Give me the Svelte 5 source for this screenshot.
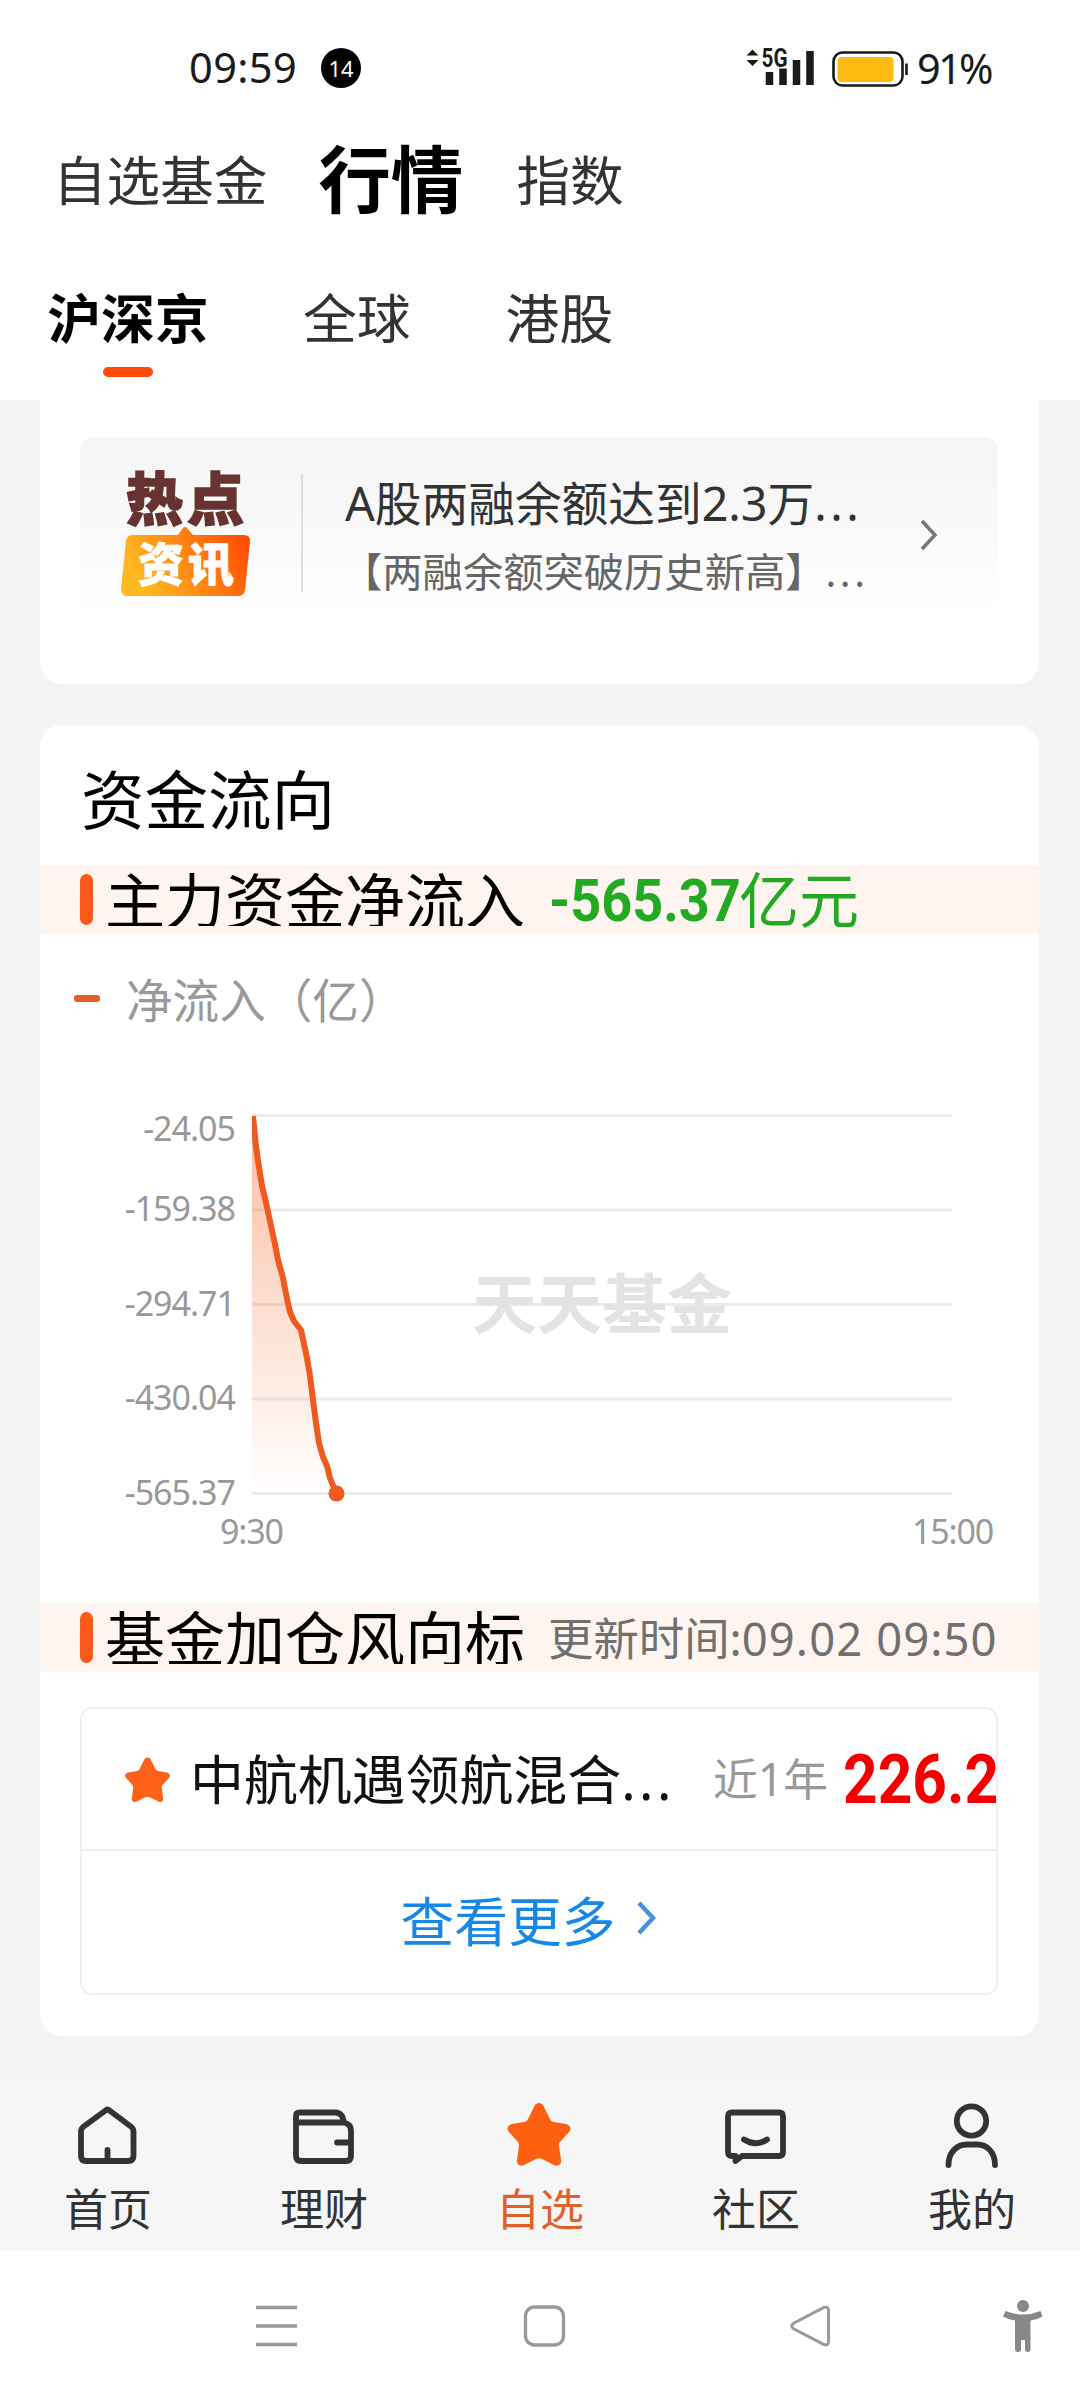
<script>
  const yLabels = ['-24.05', '-159.38', '-294.71', '-430.04', '-565.37'];
  const gridLines = [1.5, 96, 190.5, 285, 379.5];
  const line =
    'M1 2 L4 33 L7 53 L10 72 L15 93 L19 112 L23 130 L26 146 L31 164 L35 185 L38 198 L42 207 L49 216 L52 230 L55 244 L58 262 L61 286 L64 309 L67 329 L71 343 L75 352 L78 364 L84 379';
  const tabs = [
    { name: '首页', icon: 'home' },
    { name: '理财', icon: 'wallet' },
    { name: '自选', icon: 'star', active: true },
    { name: '社区', icon: 'chat' },
    { name: '我的', icon: 'user' }
  ];
  const star =
    'M32 2 C34 2 36 3 37 6 L43 18 C44 20 45 21 47 21 L59 23 C63 24 65 28 62 31 L53 41 C52 42 52 43 52 45 L54 59 C55 63 51 66 47 64 L35 58 C33 57 31 57 29 58 L17 64 C13 66 9 63 10 59 L12 45 C12 43 12 42 11 41 L2 31 C-1 28 1 24 5 23 L17 21 C19 21 20 20 21 18 L27 6 C28 3 30 2 32 2 Z';
</script>

<div class="screen">
  <div class="status">
    <span class="clock">09:59</span>
    <span class="badge">14</span>
    <svg class="signal" width="72" height="44" viewBox="0 0 72 44">
      <path d="M6.500 3.500 L12.500 9.500 H0.500 Z M6.500 20 L0.500 14 H12.500 Z" fill="#1a1a1a" />
      <text x="15.500" y="21" class="net" textLength="26" lengthAdjust="spacingAndGlyphs">5G</text>
      <path d="M23.500 26V39 M37 22.500V39 M50.500 14V39 M64 5V39" stroke="#1a1a1a" stroke-width="7.500" />
    </svg>
    <svg class="battery" width="78" height="38" viewBox="0 0 78 38">
      <rect x="1.500" y="1.500" width="69" height="33" rx="9" fill="#fff" stroke="#1a1a1a" stroke-width="2.600" />
      <rect x="5.500" y="6" width="56" height="25" rx="4" fill="#ffba12" />
      <path d="M74.500 12.500V24" stroke="#1a1a1a" stroke-width="2.600" />
    </svg>
    <span class="pct">91%</span>
  </div>

  <div class="top-tabs">
    <span>自选基金</span><strong>行情</strong><span>指数</span>
  </div>
  <div class="sub-tabs">
    <strong>沪深京</strong><span>全球</span><span>港股</span>
  </div>

  <main>
    <section class="card news-card">
      <div class="news">
        <svg class="hot" width="132" height="126" viewBox="0 0 132 126">
          <defs>
            <linearGradient id="hot" x1="0" y1="0.3" x2="1" y2="0">
              <stop offset="0" stop-color="#ffb820" />
              <stop offset="0.55" stop-color="#ff7810" />
              <stop offset="1" stop-color="#ff4200" />
            </linearGradient>
          </defs>
          <text x="6" y="49" class="hot-top" textLength="118">热点</text>
          <path d="M12 64 H58 L63 57 Q65 55 67 57 L73 64 H124 Q130 64 130 70 L125 119 Q124 125 118 125 H7 Q1 125 1 118 L6 70 Q7 64 12 64Z" fill="url(#hot)" />
          <text x="18" y="110" class="hot-bottom" textLength="96">资讯</text>
        </svg>
        <i class="rule"></i>
        <div class="news-text">
          <p class="headline">A股两融余额达到2.3万<span class="dots">...</span></p>
          <p class="summary">【两融余额突破历史新高】<span class="dots">...</span></p>
        </div>
        <svg class="chev" width="20" height="34" viewBox="0 0 20 34">
          <path d="M3 3 L16 17 L3 31" fill="none" stroke="#777" stroke-width="3.500" />
        </svg>
      </div>
    </section>

    <section class="card flow-card">
      <h2>资金流向</h2>
      <div class="band">
        <i class="mark"></i><span class="band-title">主力资金净流入</span>
        <span class="net-value"><b>-565.37</b>亿元</span>
      </div>
      <div class="legend"><i></i><span>净流入（亿）</span></div>
      <div class="chart">
        <div class="y-axis">
          {#each yLabels as label}<span>{label}</span>{/each}
        </div>
        <svg width="700" height="390" viewBox="0 0 700 390">
          <defs>
            <linearGradient id="area" x1="0" y1="0" x2="0" y2="1">
              <stop offset="0" stop-color="#f5601e" stop-opacity="0.42" />
              <stop offset="1" stop-color="#f5601e" stop-opacity="0" />
            </linearGradient>
          </defs>
          {#each gridLines as y}
            <path d="M0 {y} H700" stroke="#ececec" stroke-width="3" />
          {/each}
          <text x="220" y="214" class="watermark" textLength="260">天天基金</text>
          <path d="{line} V380 H0 V2 Z" fill="url(#area)" />
          <path d={line} fill="none" stroke="#f05a1e" stroke-width="6" stroke-linejoin="round" />
          <circle cx="84.500" cy="379.500" r="8" fill="#f05a1e" />
        </svg>
      </div>
      <div class="x-axis"><span>9:30</span><span>15:00</span></div>

      <div class="band second">
        <i class="mark"></i><span class="band-title">基金加仓风向标</span>
        <span class="updated">更新时间:<em>09.02 09:50</em></span>
      </div>
      <div class="funds">
        <div class="fund">
          <svg width="47" height="47" viewBox="0 0 64 66"><path d={star} fill="#fd6018" /></svg>
          <span class="fund-name">中航机遇领航混合<span class="dots">...</span></span>
          <span class="period">近1年</span>
          <b class="gain">226.2</b>
        </div>
        <div class="more">
          <span>查看更多</span>
          <svg width="22" height="36" viewBox="0 0 22 36">
            <path d="M3 3 L17 18 L3 33" fill="none" stroke="#4a90e2" stroke-width="4.500" />
          </svg>
        </div>
      </div>
    </section>
  </main>

  <nav class="tabbar">
    {#each tabs as tab}
      <div class="tab" class:active={tab.active}>
        <svg width="66" height="68" viewBox="0 0 66 68" fill="none" stroke="#333" stroke-width="5.800" stroke-linejoin="round" stroke-linecap="round">
          {#if tab.icon === 'home'}
            <path d="M30.500 9.500 L8 26 Q6 28 6 30 V55 Q6 60 11 60 H53 Q58.500 60 58.500 55 V30 Q58.500 28 56.500 26 L34.500 9.500 Q32.500 7.500 30.500 9.500 Z M32.500 49V59" />
          {:else if tab.icon === 'wallet'}
            <path d="M5 22 V15 Q5 11.500 9 11.500 H44 Q49 11.500 51.500 16 L53 21 M5 21.500 H53 Q60 23 60 30 V55 Q60 60 55 60 H10 Q5 60 5 55 V21.500 M59 41.500 H46" />
          {:else if tab.icon === 'star'}
            <path d={star} fill="#fd6010" stroke="none" />
          {:else if tab.icon === 'chat'}
            <path d="M9 11.500 H56 Q60 11.500 60 15.500 V51 Q60 55 56 55 H19 L12.500 60 V55 H9 Q5 55 5 51 V15.500 Q5 11.500 9 11.500 Z M21 38.500 Q32.500 46 44 38.500" />
          {:else}
            <circle cx="32.500" cy="20" r="14.700" />
            <path d="M9.500 64 C9.500 51 18 43.500 28 43.500 H38 C48 43.500 56 51 56 64" />
          {/if}
        </svg>
        <span>{tab.name}</span>
      </div>
    {/each}
  </nav>

  <footer>
    <svg width="44" height="44" viewBox="0 0 44 44"><path d="M2 3.500H43 M2 22H43 M2 40.500H43" stroke="#999" stroke-width="3.500" /></svg>
    <svg width="44" height="44" viewBox="0 0 44 44"><rect x="3.500" y="3" width="38" height="38" rx="9" fill="none" stroke="#999" stroke-width="3.300" /></svg>
    <svg width="44" height="44" viewBox="0 0 44 44"><path d="M36 3.500 Q40.500 2 40.500 6.500 V37.500 Q40.500 42 36 40.500 L6 25 Q1.500 22 6 19 Z" fill="none" stroke="#999" stroke-width="3" /></svg>
    <svg width="40" height="54" viewBox="0 0 40 54" fill="#888">
      <circle cx="20" cy="7" r="6" />
      <path d="M2.500 12 Q20 19 37.500 12 L39.500 17.500 Q34 21 27.500 21.500 V50 Q27.500 53 24.700 53 Q22 53 22 50 V41 H18 V50 Q18 53 15 53 Q12 53 12 50 V21.500 Q6 21 0 17.500 Z" />
    </svg>
  </footer>
</div>

<style>
  :global(body) { background: #fff; }
  .screen {
    width: 1080px;
    height: 2400px;
    overflow: hidden;
    display: flex;
    flex-direction: column;
    background: #fff;
    color: #333;
    font-family: "Noto Sans", "Noto Sans CJK SC", sans-serif;
    line-height: 1;
    white-space: nowrap;
  }
  .screen * { box-sizing: border-box; }
  p, h2 { margin: 0; font-weight: 400; }
  svg { display: block; flex: none; }
  em { font-style: normal; }
  .dots { letter-spacing: 3.500px; }

  .status { height: 136px; display: flex; align-items: center; padding-left: 189px; color: #1a1a1a; font-size: 41.500px; }
  .clock { width: 132px; letter-spacing: 0.400px; }
  .badge { width: 40px; height: 40px; border-radius: 50%; background: #000; color: #fff; font-size: 22px; line-height: 40px; text-align: center; }
  .signal { margin-left: 385px; overflow: visible; }
  .net { font: 700 25px Roboto, sans-serif; fill: #1a1a1a; }
  .battery { margin: 4px 0 0 14px; }
  .pct { margin: 2px 0 0 7px; letter-spacing: -2.800px; }

  .top-tabs { height: 88px; display: flex; align-items: center; padding-left: 53px; font-size: 53.600px; }
  .top-tabs strong { font-size: 72.500px; color: #000; margin: -2px 53px 0 51px; }
  .top-tabs span { margin-top: 1px; }
  .sub-tabs { height: 176px; display: flex; align-items: flex-start; padding: 66px 0 0 48px; font-size: 53.800px; line-height: 56px; }
  .sub-tabs strong { color: #000; width: 160px; height: 87px; display: flex; flex-direction: column; align-items: center; justify-content: space-between; }
  .sub-tabs strong::after { content: ""; width: 50px; height: 10px; border-radius: 5px; background: #ff4a0a; }
  .sub-tabs span { margin-left: 95px; }

  main { height: 1680px; flex: none; background: #f4f4f4; padding: 0 41px 0 40px; }
  .card { background: #fff; }
  .news-card { height: 284px; border-radius: 0 0 22px 22px; padding: 37px 41px 0 40px; }
  .news { height: 186px; border-radius: 14px; background: linear-gradient(#f4f4f4, #fff); display: flex; align-items: flex-start; }
  .hot { margin: 34px 0 0 40px; overflow: visible; }
  .hot-top { font: 900 57px "Noto Sans CJK SC", sans-serif; fill: #663330; stroke: #663330; stroke-width: 1.500; }
  .hot-bottom { font: 900 46px "Noto Sans CJK SC", sans-serif; fill: #fff; stroke: #fff; stroke-width: 0.800; }
  .rule { width: 2px; height: 118px; margin: 37px 0 0 49px; background: #ddd; }
  .news-text { width: 534px; margin: 38px 0 0 42px; }
  .headline { font-size: 46.700px; line-height: 56px; }
  .summary { font-size: 40.300px; line-height: 48px; margin: 17px 0 0 -3px; color: #666; }
  .chev { margin: 81px 0 0 40px; }

  .flow-card { height: 1311px; margin-top: 41px; border-radius: 22px; }
  h2 { height: 140px; padding: 41px 0 0 41px; font-size: 63.500px; line-height: 68px; color: #000; }
  .band { height: 69px; background: #fff5f0; display: flex; align-items: flex-start; padding: 8px 0 0 40px; }
  .mark { width: 13px; height: 51px; margin-top: 1px; border-radius: 7px; background: #fa5a1a; }
  .band-title { width: 430px; height: 53px; overflow: hidden; margin-left: 12px; font-size: 60px; line-height: 56px; color: #000; }
  .net-value { display: flex; font-size: 60px; line-height: 54px; color: #22aa22; margin-left: 14px; }
  .net-value b { width: 190px; font-family: Roboto, sans-serif; font-size: 59px; line-height: 56px; transform: scaleX(0.915); transform-origin: left; }
  .updated { margin-left: 13px; font-size: 45.400px; line-height: 54px; color: #707070; }
  .updated em { letter-spacing: 1.100px; }

  .legend { height: 132px; display: flex; align-items: center; padding-left: 34px; font-size: 46.600px; color: #999; }
  .legend i { width: 26px; height: 7px; border-radius: 3px; background: #e0622a; margin-right: 26px; margin-top: -4px; }
  .chart { margin-top: 48px; height: 390px; display: flex; justify-content: flex-end; padding-right: 87px; gap: 17px; }
  .y-axis { height: 390px; margin-top: -3px; display: flex; flex-direction: column; align-items: flex-end; font-size: 34px; line-height: 34px; color: #999; letter-spacing: -1px; }
  .y-axis span { flex: none; height: 94.500px; }
  .y-axis span:first-child { height: 80px; }
  .watermark { font: 700 65px "Noto Sans CJK SC", sans-serif; fill: #e3e3e3; }
  .x-axis { height: 99px; display: flex; justify-content: space-between; padding: 10px 46px 0 180px; font-size: 34px; line-height: 34px; color: #999; letter-spacing: -1.200px; }

  .funds { height: 288px; margin: 35px 41px 0 40px; border: 2px solid #f0f0f0; border-radius: 12px; overflow: hidden; }
  .fund { height: 142px; border-bottom: 2px solid #eee; display: flex; align-items: center; padding-left: 42px; }
  .fund-name { flex: none; width: 523px; margin: 2px 0 0 19px; font-size: 53.900px; color: #111; }
  .period { flex: none; width: 130px; font-size: 44.700px; color: #999; }
  .gain { font-family: Roboto, sans-serif; font-size: 69px; color: #f50000; transform: scaleX(0.875); transform-origin: left; }
  .more { height: 140px; display: flex; align-items: center; justify-content: center; gap: 20px; padding: 2px 20px 0 0; font-size: 53.800px; color: #1788e8; }
  .more svg { margin-top: -8px; }

  .tabbar { height: 171px; flex: none; display: flex; background: #f6f6f6; }
  .tab { width: 216px; display: flex; flex-direction: column; align-items: center; padding-top: 21px; font-size: 44px; }
  .tab span { margin-top: 18px; }
  .tab.active { color: #e0622a; }
  footer { height: 149px; flex: none; display: flex; align-items: center; padding-left: 254px; background: #fff; }
  footer svg:nth-child(2) { margin-left: 224px; }
  footer svg:nth-child(3) { margin-left: 222px; }
  footer svg:nth-child(4) { margin-left: 171px; }
</style>
